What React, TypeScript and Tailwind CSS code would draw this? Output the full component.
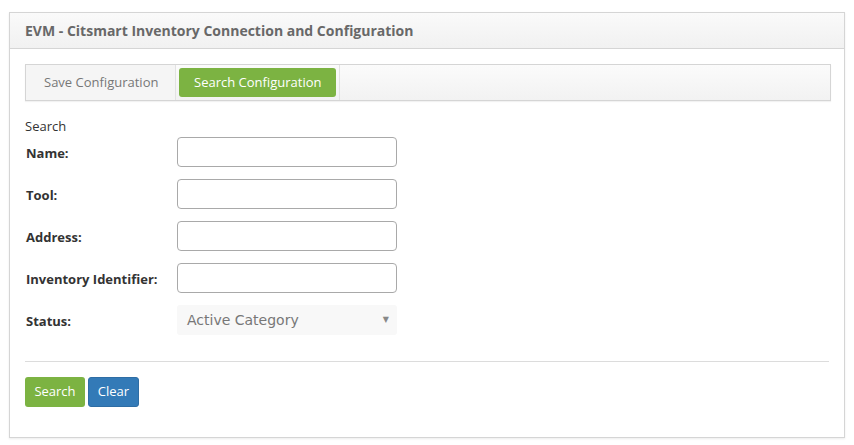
const FIELDS = ["Name:", "Tool:", "Address:", "Inventory Identifier:"];

const App = () => {
  return (
    <div className="min-h-[445px] bg-white px-[9px] pt-[12px] font-['Open_Sans',sans-serif] text-[13px] text-[#333]">
      <div className="w-[836px] border border-[#d5d5d5] shadow-[0_1px_2px_rgba(0,0,0,0.08)]">
        {/* header */}
        <div className="h-[36px] border-b border-[#d5d5d5] bg-gradient-to-b from-[#fafafa] to-[#f1f1f1] pl-[15px] pt-[8px]">
          <h3 className="text-[14px] font-bold leading-[20px] text-[#686868]">
            EVM - Citsmart Inventory Connection and Configuration
          </h3>
        </div>

        <div className="px-[15px] pt-[15px] pb-[30px]">
          {/* tabs */}
          <div className="flex h-[37px] w-[806px] border border-[#d5d5d5] bg-gradient-to-b from-[#fbfbfb] to-[#f2f2f2] shadow-[0_1px_1px_rgba(0,0,0,0.05)]">
            <div className="flex w-[150px] items-center border-r border-[#e2e2e2] bg-[#f5f5f5] pl-[18px] text-[#777]">
              Save Configuration
            </div>
            <div className="flex items-center border-r border-[#e2e2e2] px-[3px]">
              <div className="flex h-[29px] items-center rounded-[3px] bg-[#7cb342] px-[15px] text-white">
                Search Configuration
              </div>
            </div>
          </div>

          <div className="pt-[16px] leading-[18px]">Search</div>

          <div className="mt-[2px] flex flex-col gap-[12px]">
            {FIELDS.map((label) => (
              <div key={label} className="flex items-center">
                <label className="w-[152px] pl-[1px] pt-[4px] font-bold">{label}</label>
                <input
                  className="h-[30px] w-[220px] rounded-[4px] border border-[#a9a9a9] bg-white"
                  type="text"
                />
              </div>
            ))}
            <div className="flex items-center">
              <label className="w-[152px] pl-[1px] pt-[4px] font-bold">Status:</label>
              <div className="flex h-[30px] w-[220px] items-center justify-between rounded-[3px] bg-[#f8f8f8] pl-[10px] pr-[8px] font-['DejaVu_Sans',sans-serif] text-[14px] text-[#777]">
                <span>Active Category</span>
                <span className="text-[8px] text-[#888]">▼</span>
              </div>
            </div>
          </div>

          <hr className="mt-[26px] border-t border-[#dcdcdc]" />

          <div className="mt-[15px] flex gap-[3px]">
            <button className="h-[30px] w-[60px] rounded-[3px] bg-[#7cb342] text-white">Search</button>
            <button className="h-[30px] w-[51px] rounded-[3px] border border-[#2e6da4] bg-[#337ab7] text-white">
              Clear
            </button>
          </div>
        </div>
      </div>
    </div>
  );
};

export default App;
